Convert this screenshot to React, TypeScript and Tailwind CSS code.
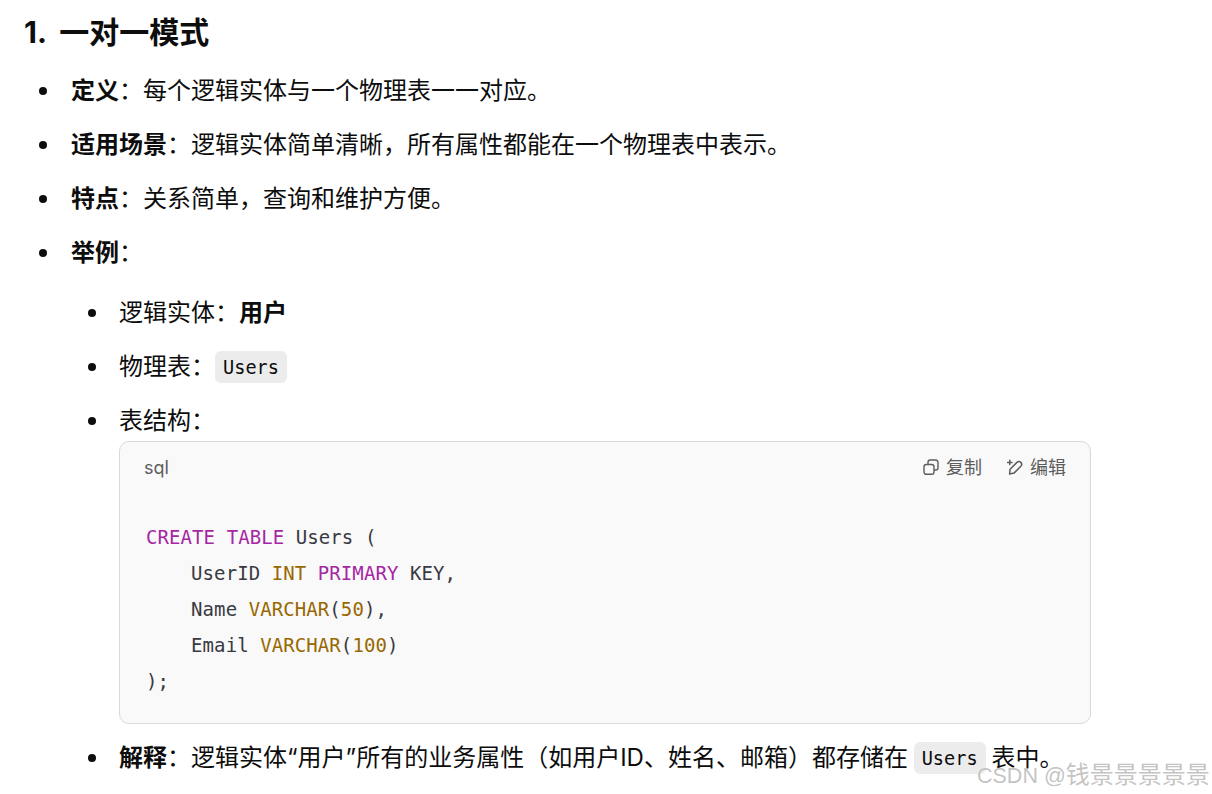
const sans = 'font-["Inter","Noto_Sans_CJK_SC",sans-serif]'
const item = 'h-[30px] leading-[30px] flex items-center whitespace-pre'

function Bullet() {
  return <span className="w-2 h-2 rounded-full bg-[#0d0d0d] shrink-0" />
}

function InlineCode({ children }: { children: string }) {
  return (
    <code className="h-8 px-2 pt-[2px] rounded-md bg-[#ececec] flex items-center font-['DejaVu_Sans_Mono',monospace] text-[18.6px] text-[#0d0d0d]">
      {children}
    </code>
  )
}

function CopyIcon() {
  return (
    <svg width="16" height="16" viewBox="0 0 16 16" fill="none" stroke="#5d5d5d" strokeWidth="1.4">
      <rect x="1" y="5.5" width="10" height="9.8" rx="2.2" />
      <path d="M5 5.5V3.2a2.2 2.2 0 0 1 2.2-2.2h5.6A2.2 2.2 0 0 1 15 3.2v5.6a2.2 2.2 0 0 1-2.2 2.2H11" />
    </svg>
  )
}

function EditIcon() {
  return (
    <svg width="16" height="16" viewBox="0 0 16 16" fill="none" stroke="#5d5d5d" strokeWidth="1.5" strokeLinejoin="round">
      <path d="M2.6 15l.5-4.8 6.8-6.8a2.7 2.7 0 0 1 3.9 3.9L7 14.1z" />
      <path d="M2.8 1.2v4.4M.6 3.4H5" strokeLinecap="round" />
    </svg>
  )
}

function CodeBlock() {
  const kw = 'text-[#a626a4]'
  const ty = 'text-[#986801]'
  return (
    <div className="ml-[119px] w-[972px] h-[283px] mt-[5px] rounded-[10px] border border-[#d9d9d9] bg-[#f9f9f9] flex flex-col">
      <div className="h-[50px] pl-6 pr-6 flex items-center justify-between text-[#5d5d5d] text-[18px]">
        <span>sql</span>
        <div className="flex items-center gap-[25px]">
          <span className="flex items-center gap-[7px]"><CopyIcon />复制</span>
          <span className="flex items-center gap-[7px]"><EditIcon />编辑</span>
        </div>
      </div>
      <pre className="mt-[27px] pl-[26px] font-['DejaVu_Sans_Mono',monospace] text-[19px] tracking-[0.08px] leading-[36px] text-[#383a42]">
        <div><span className={kw}>CREATE</span> <span className={kw}>TABLE</span> Users (</div>
        <div><span className="mr-[-1px]">    </span>UserID <span className={ty}>INT</span> <span className={kw}>PRIMARY</span> KEY,</div>
        <div><span className="mr-[-1px]">    </span>Name <span className={ty}>VARCHAR</span>(<span className={ty}>50</span>),</div>
        <div><span className="mr-[-1px]">    </span>Email <span className={ty}>VARCHAR</span>(<span className={ty}>100</span>)</div>
        <div>);</div>
      </pre>
    </div>
  )
}

export default function App() {
  return (
    <div className={`relative h-[794px] overflow-hidden bg-white text-[#0d0d0d] text-[24px] ${sans}`}>
      <h3 className="pt-[13px] pl-6 h-[60px] text-[30px] leading-[38px] font-bold [word-spacing:6px]">1. 一对一模式</h3>

      <ul className="mt-[16px] flex flex-col gap-6 pl-[39px]">
        <li className={`${item} gap-6`}><Bullet /><span><b>定义</b>：每个逻辑实体与一个物理表一一对应。</span></li>
        <li className={`${item} gap-6`}><Bullet /><span><b>适用场景</b>：逻辑实体简单清晰，所有属性都能在一个物理表中表示。</span></li>
        <li className={`${item} gap-6`}><Bullet /><span><b>特点</b>：关系简单，查询和维护方便。</span></li>
        <li className={`${item} gap-6`}><Bullet /><span><b>举例</b>：</span></li>
      </ul>

      <ul className="mt-[30px] flex flex-col gap-6 pl-[88px]">
        <li className={`${item} gap-[23px]`}><Bullet /><span>逻辑实体：<b>用户</b></span></li>
        <li className={`${item} gap-[23px]`}><Bullet /><span className="flex items-center">物理表：<InlineCode>Users</InlineCode></span></li>
        <li className={`${item} gap-[23px]`}><Bullet /><span>表结构：</span></li>
      </ul>

      <CodeBlock />

      <div className={`${item} gap-[23px] mt-[19px] pl-[88px]`}>
        <Bullet />
        <span className="flex items-center">
          <span className="mr-[-1px]"><b>解释</b>：逻辑实体“用户”所有的业务属性（如用户ID、姓名、邮箱）都存储在 </span>
          <InlineCode>Users</InlineCode>
          <span className="ml-[-1px]"> 表中。</span>
        </span>
      </div>

      <div className="absolute left-[977px] top-[760px] text-[24px] leading-[30px] whitespace-nowrap text-[#b4b4b4]/80 [text-shadow:0_0_1px_#ffffff]">
        <span className="font-['Liberation_Sans',sans-serif] text-[21.5px]">CSDN @</span>钱景景景景景
      </div>
    </div>
  )
}
